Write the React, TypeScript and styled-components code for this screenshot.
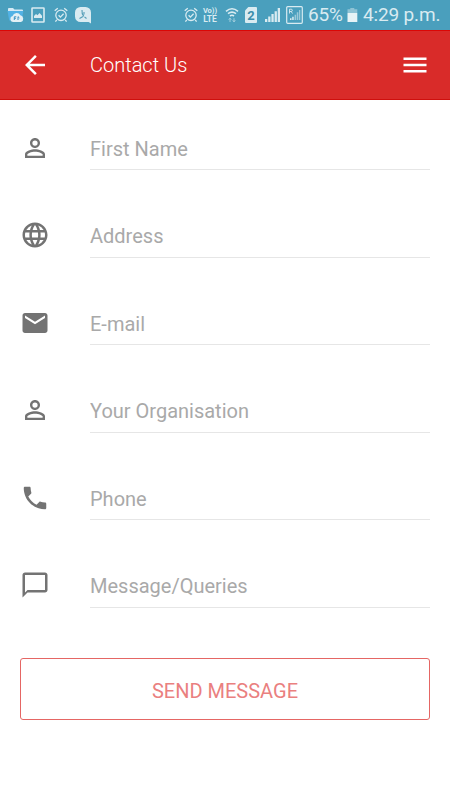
import React from "react";
import styled, { createGlobalStyle } from "styled-components";

const GlobalStyle = createGlobalStyle`
  * { box-sizing: border-box; }
  html, body { margin: 0; padding: 0; background: #fff; }
  body { font-family: Roboto, "Liberation Sans", sans-serif; }
`;

const Screen = styled.main`
  width: 450px;
  height: 800px;
  background: #fff;
  overflow: hidden;
`;

const StatusBar = styled.div`
  height: 30px;
  display: flex;
  align-items: center;
  padding: 0 10px 0 7px;
  background: #4a9fbd;
  color: #d9ebf1;
`;

const StatusIcon = styled.svg<{ $gap?: number }>`
  display: block;
  flex: none;
  margin-right: ${({ $gap = 0 }) => $gap}px;
`;

const StatusText = styled.span<{ $width: number; $gap?: number; $spacing?: number }>`
  flex: none;
  width: ${({ $width }) => $width}px;
  margin-right: ${({ $gap = 0 }) => $gap}px;
  font-size: 19px;
  line-height: 30px;
  letter-spacing: ${({ $spacing = 0 }) => $spacing}px;
  white-space: nowrap;
`;

const Spacer = styled.div`
  flex: 1;
`;

const VoLte = styled.div`
  width: 16px;
  margin-right: 7px;
  flex: none;
  display: flex;
  flex-direction: column;
  align-items: center;
  font-weight: 700;
  white-space: nowrap;
`;

const VoLteLine = styled.div<{ $size: number }>`
  font-size: ${({ $size }) => $size}px;
  line-height: 9px;
`;

const Sim = styled.div`
  width: 12px;
  height: 16px;
  margin-right: 8px;
  flex: none;
  background: #d9ebf1;
  color: #3b8dab;
  border-radius: 1px;
  clip-path: polygon(28% 0, 100% 0, 100% 100%, 0 100%, 0 22%);
  font-size: 13px;
  font-weight: 700;
  line-height: 17px;
  text-align: center;
`;

const AppBar = styled.header`
  height: 70px;
  display: flex;
  align-items: center;
  padding: 0 20px;
  background: #d92b29;
  border-top: 1px solid #dc0605;
  border-bottom: 1px solid #cf0f0d;
  color: #fff;
`;

const IconButton = styled.button`
  display: flex;
  padding: 0;
  border: 0;
  background: none;
  color: inherit;
`;

const Title = styled.h1`
  flex: 1;
  margin: 0 0 0 40px;
  font-size: 20px;
  font-weight: 300;
  line-height: 30px;
  padding-bottom: 1px;
`;

const Form = styled.form`
  display: flex;
  flex-direction: column;
  gap: 17.5px;
`;

const Row = styled.label`
  height: 70px;
  display: flex;
  padding: 0 20px;
`;

const RowIcon = styled.span`
  width: 70px;
  padding-top: 32.5px;
  color: #737373;
`;

const Field = styled.input`
  flex: 1;
  min-width: 0;
  padding: 28px 0 0;
  border: 0;
  border-bottom: 1px solid #e6e6e6;
  outline: 0;
  background: none;
  font: 400 20px Roboto, "Liberation Sans", sans-serif;
  color: #444;
  &::placeholder {
    color: #a9a9a9;
    opacity: 1;
  }
`;

const SendButton = styled.button`
  height: 62.5px;
  margin: 32.5px 20px 0;
  padding: 4px 0 0;
  border: 1px solid #e56664;
  border-radius: 3px;
  background: #fff;
  color: #ea807f;
  font: 400 20px Roboto, "Liberation Sans", sans-serif;
`;

const Glyph = ({ d, size = 30 }: { d: string; size?: number }) => (
  <svg width={size} height={size} viewBox="0 0 24 24" fill="currentColor" display="block">
    <path d={d} />
  </svg>
);

const PERSON =
  "M12 5.9a2.1 2.1 0 1 1 0 4.2 2.1 2.1 0 0 1 0-4.2m0 9c2.97 0 6.1 1.46 6.1 2.1v1.1H5.9V17c0-.64 3.13-2.1 6.1-2.1M12 4C9.79 4 8 5.79 8 8s1.79 4 4 4 4-1.79 4-4-1.79-4-4-4zm0 9c-2.67 0-8 1.34-8 4v3h16v-3c0-2.66-5.33-4-8-4z";
const GLOBE =
  "M11.99 2C6.47 2 2 6.48 2 12s4.47 10 9.99 10C17.52 22 22 17.52 22 12S17.52 2 11.99 2zm6.93 6h-2.95a15.65 15.65 0 0 0-1.38-3.56A8.03 8.03 0 0 1 18.92 8zM12 4.04c.83 1.2 1.48 2.53 1.91 3.96h-3.82c.43-1.43 1.08-2.76 1.91-3.96zM4.26 14C4.1 13.36 4 12.69 4 12s.1-1.36.26-2h3.38c-.08.66-.14 1.32-.14 2s.06 1.34.14 2H4.26zm.82 2h2.95c.32 1.25.78 2.45 1.38 3.56A7.99 7.99 0 0 1 5.08 16zm2.95-8H5.08a7.99 7.99 0 0 1 4.33-3.56A15.65 15.65 0 0 0 8.03 8zM12 19.96c-.83-1.2-1.48-2.53-1.91-3.96h3.82c-.43 1.43-1.08 2.76-1.91 3.96zM14.34 14H9.66c-.09-.66-.16-1.32-.16-2s.07-1.35.16-2h4.68c.09.65.16 1.32.16 2s-.07 1.34-.16 2zm.25 5.56c.6-1.11 1.06-2.31 1.38-3.56h2.95a8.03 8.03 0 0 1-4.33 3.56zM16.36 14c.08-.66.14-1.32.14-2s-.06-1.34-.14-2h3.38c.16.64.26 1.31.26 2s-.1 1.36-.26 2h-3.38z";
const MAIL =
  "M20 4H4c-1.1 0-1.99.9-1.99 2L2 18c0 1.1.9 2 2 2h16c1.1 0 2-.9 2-2V6c0-1.1-.9-2-2-2zm0 4l-8 5-8-5V6l8 5 8-5v2z";
const PHONE =
  "M6.62 10.79c1.44 2.83 3.76 5.14 6.59 6.59l2.2-2.2c.27-.27.67-.36 1.02-.24 1.12.37 2.33.57 3.57.57.55 0 1 .45 1 1V20c0 .55-.45 1-1 1-9.39 0-17-7.61-17-17 0-.55.45-1 1-1h3.5c.55 0 1 .45 1 1 0 1.25.2 2.45.57 3.57.11.35.03.74-.25 1.02l-2.2 2.2z";
const CHAT =
  "M20 2H4c-1.1 0-2 .9-2 2v18l4-4h14c1.1 0 2-.9 2-2V4c0-1.1-.9-2-2-2zm0 14H6l-2 2V4h16v12z";
const BACK = "M20 11H7.83l5.59-5.59L12 4l-8 8 8 8 1.41-1.41L7.83 13H20v-2z";

const fields = [
  { label: "First Name", icon: PERSON },
  { label: "Address", icon: GLOBE },
  { label: "E-mail", icon: MAIL },
  { label: "Your Organisation", icon: PERSON },
  { label: "Phone", icon: PHONE },
  { label: "Message/Queries", icon: CHAT },
];

const Alarm = ({ gap }: { gap: number }) => (
  <StatusIcon $gap={gap} width="14" height="16" viewBox="0 0 14 16" fill="none" stroke="currentColor" strokeWidth="1.3">
    <circle cx="7" cy="8.3" r="5.2" />
    <path d="M.7 3.8 3.8 1.2M10.2 1.2l3.1 2.6M2.8 12.8 1.4 14.6M11.2 12.8l1.4 1.8M4.6 8.2l1.8 1.9 3.2-3.4" />
  </StatusIcon>
);

export default function App() {
  return (
    <>
      <GlobalStyle />
      <Screen>
        <StatusBar>
          <StatusIcon $gap={7} width="17" height="16" viewBox="0 0 17 16">
            <path d="M1 3V1.8Q1 1 2 1h4l1.5 1.5H15q1 0 1 1V5H1z" fill="#d5eaf5" />
            <path d="M.5 4h15.8l-1.5 9.5H2.2z" fill="#52b2e5" />
            <path d="M6 15a3 3 0 0 1-.4-5.9 4.2 4.2 0 0 1 7.8-.8A3.5 3.5 0 0 1 14 15z" fill="#e3f0f5" />
            <path d="M7.3 13V9.8h2M7.3 11.3h1.6M11 13V9.7l1.4 1.2" fill="none" stroke="#3e94c2" />
          </StatusIcon>
          <StatusIcon $gap={9} width="14" height="16" viewBox="0 0 14 16">
            <rect x="1" y="1" width="12" height="14" rx=".5" fill="none" stroke="#d9ebf1" strokeWidth="1.6" />
            <path d="M3 11V9l2-2 1.5 1.2L8.5 6 11 8.8V11z" fill="#d9ebf1" />
          </StatusIcon>
          <Alarm gap={6} />
          <StatusIcon width="18" height="18" viewBox="0 0 18 18">
            <path d="M6.5 1h5A5.5 5.5 0 0 1 17 6.5v11L14.6 16H6.5A5.5 5.5 0 0 1 1 10.5v-4A5.5 5.5 0 0 1 6.5 1z" fill="#d9ebf1" />
            <path d="M8 4c-.3 2.6.2 4.6 1.8 6.4M5.5 12.5l3.5-2M10.5 10.8l2 1.7M10 6v2.5" fill="none" stroke="#539db7" strokeWidth="1.1" />
          </StatusIcon>
          <Spacer />
          <Alarm gap={4} />
          <VoLte>
            <VoLteLine $size={7.5}>Vo))</VoLteLine>
            <VoLteLine $size={8.5}>LTE</VoLteLine>
          </VoLte>
          <StatusIcon $gap={6} width="14" height="16" viewBox="0 0 14 16" fill="none" stroke="currentColor" strokeWidth="1.6">
            <path d="M1 4.3Q7-.8 13 4.3M3 6.7q4-3.1 8 0M5 9q2-1.5 4 0" />
            <path d="M5 15v-3.5M3.7 12.7 5 11.2l1.3 1.5M9 11.2v3.5M7.7 13.3 9 14.8l1.3-1.5" strokeWidth="1" opacity=".6" />
          </StatusIcon>
          <Sim>2</Sim>
          <StatusIcon $gap={6} width="15" height="16" viewBox="0 0 15 16" fill="currentColor">
            <path d="M0 12h2.3v3H0zM3.2 9.6h2.3V15H3.2zM6.4 7h2.3v8H6.4zM9.6 4.2h2.3V15H9.6zM12.7 1H15v14h-2.3z" />
          </StatusIcon>
          <StatusIcon $gap={5} width="17" height="18" viewBox="0 0 17 18">
            <rect x=".7" y=".7" width="15.6" height="16.6" rx="1" fill="none" stroke="#d9ebf1" strokeWidth="1.2" />
            <path d="M4 14v-1.8h1.5V14zM6.2 14v-3.2h1.5V14z" fill="#d9ebf1" />
            <path d="M8.6 14V8.8h1.5V14zM10.8 14V6.3h1.5V14zM13 14V4h1.3v10z" fill="#9bcad9" />
            <path d="M3.5 7.5V3.2h1.7a1.1 1.1 0 0 1 0 2.3H3.5m1.7 0 1.3 2" fill="none" stroke="#d9ebf1" strokeWidth=".9" />
          </StatusIcon>
          <StatusText $width={35} $gap={4} $spacing={-0.2}>65%</StatusText>
          <StatusIcon $gap={5} width="11" height="16" viewBox="0 0 11 16">
            <path d="M3.3 1h4v1.3h3V6H.5V2.3h2.8z" fill="#8ec3d5" />
            <path d="M.5 6h9.8v9H.5z" fill="#e7f3f6" />
          </StatusIcon>
          <StatusText $width={77} $spacing={-0.15}>4:29 p.m.</StatusText>
        </StatusBar>
        <AppBar>
          <IconButton aria-label="Back">
            <Glyph d={BACK} />
          </IconButton>
          <Title>Contact Us</Title>
          <IconButton aria-label="Menu">
            <svg width="30" height="30" viewBox="0 0 30 30" fill="none" stroke="currentColor" strokeWidth="2.5">
              <path d="M3.5 8.75h23M3.5 15h23M3.5 21.25h23" />
            </svg>
          </IconButton>
        </AppBar>
        <Form>
          {fields.map(({ label, icon }) => (
            <Row key={label}>
              <RowIcon>
                <Glyph d={icon} />
              </RowIcon>
              <Field placeholder={label} />
            </Row>
          ))}
          <SendButton type="button">SEND MESSAGE</SendButton>
        </Form>
      </Screen>
    </>
  );
}
